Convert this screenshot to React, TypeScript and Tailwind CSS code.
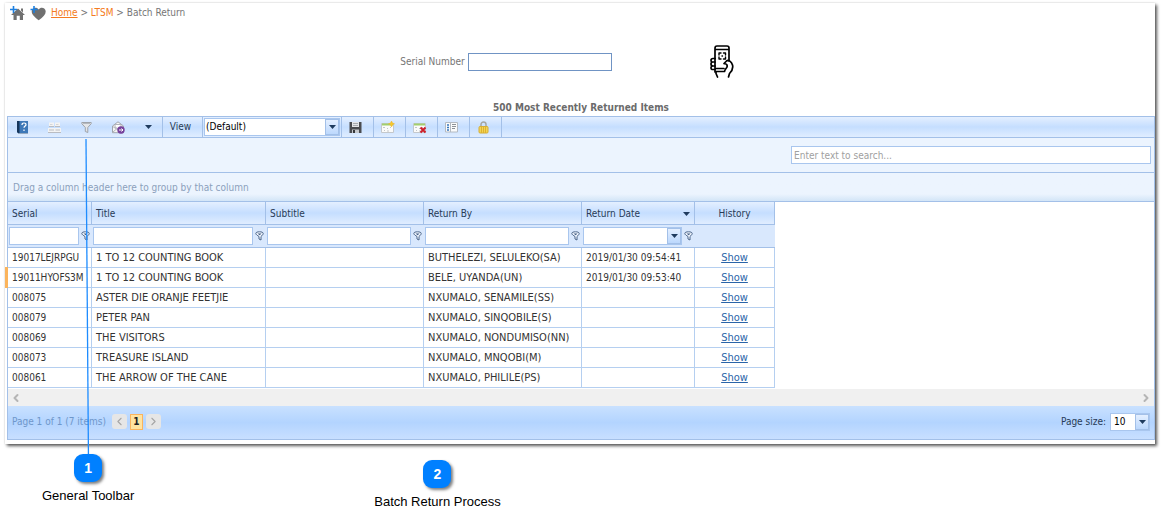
import React from 'react';
import { ChevronLeft, ChevronRight } from 'lucide-react';

const barBg = 'bg-linear-to-b from-[#e4efff] via-[#c5deff] to-[#e0edff]';
const line = 'border-[#a3c0e8]';

const rows = [
  { serial: '19017LEJRPGU', title: '1 TO 12 COUNTING BOOK', by: 'BUTHELEZI, SELULEKO(SA)', date: '2019/01/30 09:54:41' },
  { serial: '19011HYOFS3M', title: '1 TO 12 COUNTING BOOK', by: 'BELE, UYANDA(UN)', date: '2019/01/30 09:53:40', marked: true },
  { serial: '008075', title: 'ASTER DIE ORANJE FEETJIE', by: 'NXUMALO, SENAMILE(SS)', date: '' },
  { serial: '008079', title: 'PETER PAN', by: 'NXUMALO, SINQOBILE(S)', date: '' },
  { serial: '008069', title: 'THE VISITORS', by: 'NXUMALO, NONDUMISO(NN)', date: '' },
  { serial: '008073', title: 'TREASURE ISLAND', by: 'NXUMALO, MNQOBI(M)', date: '' },
  { serial: '008061', title: 'THE ARROW OF THE CANE', by: 'NXUMALO, PHILILE(PS)', date: '' },
];

function Arrow() {
  return (
    <svg width="7" height="4" viewBox="0 0 7 4" fill="#1f3b5e">
      <path d="M0 0h7L3.5 4z" />
    </svg>
  );
}

function DropArrow() {
  return (
    <span className="pointer-events-none absolute right-[1px] top-[1px] bottom-[1px] w-[14px] flex items-center justify-center border border-[#a3c0e8] bg-linear-to-b from-[#e4efff] to-[#bcd8fd]">
      <Arrow />
    </span>
  );
}

function HomeIcon() {
  return (
    <svg width="16" height="16" viewBox="0 0 16 16">
      <path d="M9 3.500 16 10h-2v5h-3.200v-4.200H7.700V15H4.500v-5H2zM12 3.500h2v4l-2-2z" fill="#707070" />
      <path d="M4.500 1v7M1 4.500h7" stroke="#1c7fe0" strokeWidth="1.600" />
    </svg>
  );
}

function HeartIcon() {
  return (
    <svg width="16" height="16" viewBox="0 0 16 16">
      <path d="M8.700 15.300C4 11.500 1.700 9 1.700 6.500c0-4 5-5 7-2C10.500 1.500 15.700 2.500 15.700 6.500c0 3-2.500 5.500-7 8.800z" fill="#707070" />
      <path d="M4 1v7M.5 4.500h7" stroke="#1c7fe0" strokeWidth="1.600" />
    </svg>
  );
}

function PhoneIcon() {
  return (
    <svg width="24" height="33" viewBox="0 0 24 33" fill="none" stroke="#000" strokeWidth="1.700" strokeLinecap="round" strokeLinejoin="round">
      <path d="M5 27V3.200Q5 1 7 1h10q2 0 2 2v13M5 4.500h14M5 23.500h9" />
      <path d="M5 13.500H3q-2 0-2 1.800t2 1.700h2M3 17q-2 0-2 2t2 2h2M3 21q-2 0-2 1.800T3 24.500h2" />
      <path d="M14 18.500l2.500-2.500c2-1.500 5 .5 6 4 .8 3-.5 6-3 8.500l-1 3.500M14 18.500c3 0 3.500 2 3 3.500s-2 2-2.500 4.500H6v2l1.500 3.500" />
      <path d="M9 10V8h2M13.500 8h2v2M15.500 12v2h-2M11 14H9v-2M12 11h.5" strokeWidth="1.400" />
    </svg>
  );
}

function FilterGlyph() {
  return (
    <svg className="shrink-0" width="9" height="10" viewBox="0 0 9 10">
      <path d="M.8 2.500C.8 1.300 2.500.8 4.500.8s3.700.5 3.700 1.700c0 1-1.200 2-2.200 3V9L4 8V5.500c-1.500-1-3.200-2-3.200-3z" fill="#f2f7ff" stroke="#4a6489" />
      <path d="M2.500 2.500h4L4.700 4.200z" fill="#3d587f" />
    </svg>
  );
}

function HelpIcon() {
  return (
    <svg width="13" height="13" viewBox="0 0 13 13">
      <path d="M1 0h11v12H2L1 11z" fill="#3d78b8" />
      <path d="M1 0h2.500v12H2L1 11z" fill="#16365c" />
      <path d="M6 4q0-2 2-2t2 1.700c0 1.300-2 1.300-2 3M8 8.500V10" stroke="#fff" strokeWidth="1.200" fill="none" />
      <path d="M2 12.500h10" stroke="#94a9c0" />
    </svg>
  );
}

function CardsIcon() {
  return (
    <svg width="13" height="13" viewBox="0 0 13 13">
      <path d="M1 1.500h5V6H1zM7 1.500h5V6H7zM0 7h13v5H0z" fill="#f3f3f3" />
      <path d="M1 5.500h5M7 5.500h5M0 11.500h13M1 9h5M7.500 9h4.500" stroke="#b9bcc2" />
      <path d="M2 3.500h2.500M8 3.500h2.500" stroke="#d3d5d9" />
    </svg>
  );
}

function FunnelIcon() {
  return (
    <svg width="11" height="13" viewBox="0 0 11 13">
      <path d="M.8 1.500h9.400v1.200L6.800 6.500v5l-2.500-1v-4L.8 2.700z" fill="#e3e5e8" stroke="#9ea3aa" />
      <path d="M2 2.500h7" stroke="#b4b8be" />
    </svg>
  );
}

function MailIcon() {
  return (
    <svg width="13" height="13" viewBox="0 0 13 13">
      <path d="M.5 5 6 .8 11.500 5v6.700H.5z" fill="#f5f5f5" stroke="#a0a5ad" />
      <path d="M3 3.500h6V6L6 8 3 6zM.8 5.500 6 9l5-3.500M1 11l3.500-3" fill="#fff" stroke="#b2b5bb" />
      <circle cx="9" cy="9" r="3.700" fill="#76419c" />
      <path d="M7 9h4M9.500 7.500 11 9l-1.500 1.500" stroke="#fff" fill="none" />
    </svg>
  );
}

function SaveIcon() {
  return (
    <svg width="13" height="13" viewBox="0 0 13 13">
      <path d="M.5 1H12l.5.500V12H.5z" fill="#4a4c50" />
      <path d="M3 1h7v5H3z" fill="#e3e5e8" />
      <path d="M3 8.500h7V12H3z" fill="#c5c8cc" />
      <path d="M4 9h2v3H4z" fill="#35373b" />
      <path d="M4 2.500h5M4 4.500h5" stroke="#a7abb0" />
    </svg>
  );
}

function SheetIcon({ remove = false }) {
  return (
    <svg width="14" height="13" viewBox="0 0 14 13">
      <path d="M.5 2.500h12v9H.5z" fill="#fbfbfa" stroke="#c4c8cc" />
      <path d="M1 3.500h11" stroke="#a2cf6e" strokeWidth="2" />
      <path d="M2 6.500h2M3 9.500h1M6 7.500h1M9 6.500h1M6 10h2" stroke="#c2c6ca" />
      {remove ? (
        <path d="M7.500 6.500l5 5M12.500 6.500l-5 5" stroke="#cc1e2b" strokeWidth="2" />
      ) : (
        <path d="M10.500 0l1 2 2 .8-2 1L10.500 6l-1-2.200-2-1 2-.8z" fill="#f8c82d" stroke="#eab32a" strokeWidth=".5" />
      )}
    </svg>
  );
}

function ListIcon() {
  return (
    <svg width="13" height="13" viewBox="0 0 13 13">
      <path d="M.5 1.500h12v9.500H.5zM5.500 1.500V11" fill="#fafbfc" stroke="#b4bac2" />
      <path d="M2 4h2M2 6.500h2M2 9h2" stroke="#3476bd" strokeWidth="1.500" />
      <path d="M7 3.500h4M7 5.500h4M7 7.500h3" stroke="#8d9197" />
    </svg>
  );
}

function LockIcon() {
  return (
    <svg width="11" height="13" viewBox="0 0 11 13">
      <path d="M3 6V3.500a2.500 2.500 0 0 1 5 0V6" fill="none" stroke="#a5a7a3" strokeWidth="1.500" />
      <rect x="1" y="5.500" width="9" height="6.500" rx="1" fill="#f2d455" stroke="#d6ae35" />
      <path d="M3.500 6v6M5.500 6v6M7.500 6v6" stroke="#dfb22f" />
    </svg>
  );
}

function ToolButton({ label, divided = false, children }: { label: string; divided?: boolean; children: React.ReactNode }) {
  return (
    <button
      aria-label={label}
      className={`w-8 h-full flex items-center justify-center pr-1 ${divided ? 'border-r border-[#a3c0e8]' : ''}`}
    >
      {children}
    </button>
  );
}

function FilterCell({ label }: { label: string }) {
  return (
    <td className="p-0 border-b border-[#a3c0e8]">
      <div className="flex items-center gap-[2px] pl-[1px] pr-[2px]">
        <input aria-label={label} className="h-[18px] min-w-0 flex-1 px-1 bg-white border border-[#a9c6ee] outline-none" />
        <FilterGlyph />
      </div>
    </td>
  );
}

function Callout({ number, text }: { number: number; text: string }) {
  return (
    <div className="flex flex-col items-center gap-[6px] font-['Liberation_Sans',sans-serif] text-black">
      <span className="relative flex h-7 w-7 items-center justify-center rounded-[9px] bg-[#0080ff] text-[14px] font-bold text-white shadow-[2px_2px_3px_rgba(0,0,0,0.5)]">
        {number}
      </span>
      <span className="text-[13px] leading-4">{text}</span>
    </div>
  );
}

export default function App() {
  const th = `h-[23px] px-1 pt-[1px] text-left font-normal border-r border-b ${line}`;
  const td = 'h-5 px-1 border-r border-b border-[#b5cff0] whitespace-nowrap';

  return (
    <div className="min-h-screen bg-white font-['DejaVu_Sans_Condensed','DejaVu_Sans',sans-serif] text-[10px] leading-[14px] text-[#333]">
      <div className="pt-[3px] pl-[5px] pr-2">
        <main className="pb-1 pl-[2px] bg-white shadow-[2px_2px_3px_rgba(0,0,0,0.65),0_0_2px_rgba(0,0,0,0.15)]">
          <nav className="flex h-5 items-center gap-[5px] pl-[2px] text-[#767676]">
            <button aria-label="Add to home"><HomeIcon /></button>
            <button aria-label="Add to favourites"><HeartIcon /></button>
            <span>
              <a href="#home" className="text-[#f47b20] underline">Home</a> &gt;{' '}
              <a href="#ltsm" className="text-[#f47b20]">LTSM</a> &gt; Batch Return
            </span>
          </nav>

          <div className="flex items-center justify-center pt-[22px] pr-7">
            <label htmlFor="serial" className="text-[#767676]">Serial Number</label>
            <input id="serial" className="ml-[3px] h-[18px] w-36 px-1 border border-[#7094c4] outline-none" />
            <button aria-label="Scan" className="ml-[98px]"><PhoneIcon /></button>
          </div>

          <h1 className="pt-[23px] pb-[1px] text-center font-bold text-[#6b6b6b]">500 Most Recently Returned Items</h1>

          <section className={`border ${line}`}>
            <div className={`flex h-[21px] items-stretch border-b ${line} ${barBg} text-[#283b56]`}>
              <div className={`flex border-r ${line} pr-[2px]`}>
                <ToolButton label="Help"><HelpIcon /></ToolButton>
                <ToolButton label="Cards"><CardsIcon /></ToolButton>
                <ToolButton label="Filter"><FunnelIcon /></ToolButton>
                <ToolButton label="Mail"><MailIcon /></ToolButton>
                <button aria-label="More" className="w-6 flex items-center justify-center"><Arrow /></button>
              </div>
              <label htmlFor="view" className={`flex w-10 items-center justify-center border-r ${line} pr-1`}>View</label>
              <div className={`border-r ${line} p-[1px]`}>
                <div className="relative h-full">
                  <select id="view" className="h-full w-34 appearance-none border border-[#a9c6ee] bg-white px-[1px] text-black outline-none">
                    <option>(Default)</option>
                  </select>
                  <DropArrow />
                </div>
              </div>
              <ToolButton label="Save" divided><SaveIcon /></ToolButton>
              <ToolButton label="New view" divided><SheetIcon /></ToolButton>
              <ToolButton label="Delete view" divided><SheetIcon remove /></ToolButton>
              <ToolButton label="List" divided><ListIcon /></ToolButton>
              <ToolButton label="Lock" divided><LockIcon /></ToolButton>
            </div>

            <div className={`flex h-[35px] items-center justify-end border-b ${line} bg-[#ecf4fe] pr-[3px]`}>
              <input
                type="search"
                aria-label="Search"
                placeholder="Enter text to search..."
                className="h-[18px] w-90 border border-[#a9c6ee] bg-white px-[2px] outline-none placeholder:text-[#a0a0a0]"
              />
            </div>

            <div className={`flex h-[29px] items-center border-b ${line} bg-linear-to-b from-[#ecf4fe] from-75% to-[#d3e5f7] pl-[5px] pt-[1px] text-[#8ba0bc]`}>
              Drag a column header here to group by that column
            </div>

            <table className="w-[767px] table-fixed border-separate border-spacing-0">
              <colgroup>
                <col className="w-[84px]" />
                <col className="w-[174px]" />
                <col className="w-[158px]" />
                <col className="w-[158px]" />
                <col className="w-[113px]" />
                <col className="w-[80px]" />
              </colgroup>
              <thead className="text-[#283b56]">
                <tr>
                  <th className={`${th} ${barBg}`}>Serial</th>
                  <th className={`${th} ${barBg}`}>Title</th>
                  <th className={`${th} ${barBg}`}>Subtitle</th>
                  <th className={`${th} ${barBg}`}>Return By</th>
                  <th className={`${th} ${barBg}`}>
                    <span className="flex items-center justify-between">Return Date <Arrow /></span>
                  </th>
                  <th className={`${th} ${barBg}`}><span className="block text-center">History</span></th>
                </tr>
                <tr className="h-[23px] bg-[#d9e8fd]">
                  <FilterCell label="Filter serial" />
                  <FilterCell label="Filter title" />
                  <FilterCell label="Filter subtitle" />
                  <FilterCell label="Filter return by" />
                  <td className={`p-0 border-b ${line}`}>
                    <div className="flex items-center gap-[2px] pl-[1px] pr-[2px]">
                      <div className="relative flex flex-1">
                        <input aria-label="Filter return date" className="h-[18px] w-full px-1 bg-white border border-[#a9c6ee] outline-none" />
                        <DropArrow />
                      </div>
                      <FilterGlyph />
                    </div>
                  </td>
                  <td className={`border-b ${line}`} />
                </tr>
              </thead>
              <tbody className="text-[11px]">
                {rows.map((row) => (
                  <tr key={row.serial}>
                    <td className={`${td} relative text-[10px]`}>
                      {row.marked && <span className="absolute -left-[3px] -top-[1px] -bottom-[1px] w-[3px] bg-[#fbb45c]" />}
                      {row.serial}
                    </td>
                    <td className={td}>{row.title}</td>
                    <td className={td} />
                    <td className={td}>{row.by}</td>
                    <td className={`${td} text-[10px]`}>{row.date}</td>
                    <td className={`${td} text-center`}>
                      <a href="#history" className="text-[#2a64a8] underline">Show</a>
                    </td>
                  </tr>
                ))}
              </tbody>
            </table>

            <div className="mt-[1px] flex h-[17px] items-center justify-between bg-[#f0f0f0] px-[2px] text-[#b5b5b5]">
              <button aria-label="Scroll left"><ChevronLeft size={12} strokeWidth={4} /></button>
              <button aria-label="Scroll right"><ChevronRight size={12} strokeWidth={4} /></button>
            </div>

            <div className="flex h-[33px] items-center justify-between bg-linear-to-b from-[#c9e1ff] via-[#b3d4ff] to-[#c8dfff] pb-[2px] pl-1 pr-1">
              <div className="flex items-center text-[#6f97ca]">
                Page 1 of 1 (7 items)
                <button aria-label="Previous page" className="ml-[6px] flex h-[15px] w-[15px] items-center justify-center rounded-[3px] bg-[#e6e6e6] text-[#a5a5a5]">
                  <ChevronLeft size={13} />
                </button>
                <button className="mx-[3px] h-4 w-[13px] border border-[#fbb45c] bg-[#ffe3a0] font-bold text-[#222]">1</button>
                <button aria-label="Next page" className="flex h-[15px] w-[15px] items-center justify-center rounded-[3px] bg-[#e6e6e6] text-[#a5a5a5]">
                  <ChevronRight size={13} />
                </button>
              </div>
              <div className="flex items-center gap-1 text-[#283b56]">
                <label htmlFor="pagesize">Page size:</label>
                <div className="relative">
                  <select id="pagesize" className="block h-[18px] w-10 appearance-none border border-[#a9c6ee] bg-white px-[3px] text-black outline-none">
                    <option>10</option>
                  </select>
                  <DropArrow />
                </div>
              </div>
            </div>
          </section>
        </main>
      </div>

      <div className="flex items-start">
        <div className="relative ml-[42px] mt-[10px]">
          {/* leader from the toolbar filter button down to its badge */}
          <svg className="pointer-events-none absolute bottom-[41px] left-[41px]" width="8" height="324" viewBox="0 0 8 324">
            <path d="M3 0 5.500 324" stroke="#1e8cff" strokeWidth="1.300" />
          </svg>
          <Callout number={1} text="General Toolbar" />
        </div>
        <div className="ml-60 mt-4">
          <Callout number={2} text="Batch Return Process" />
        </div>
      </div>
    </div>
  );
}
